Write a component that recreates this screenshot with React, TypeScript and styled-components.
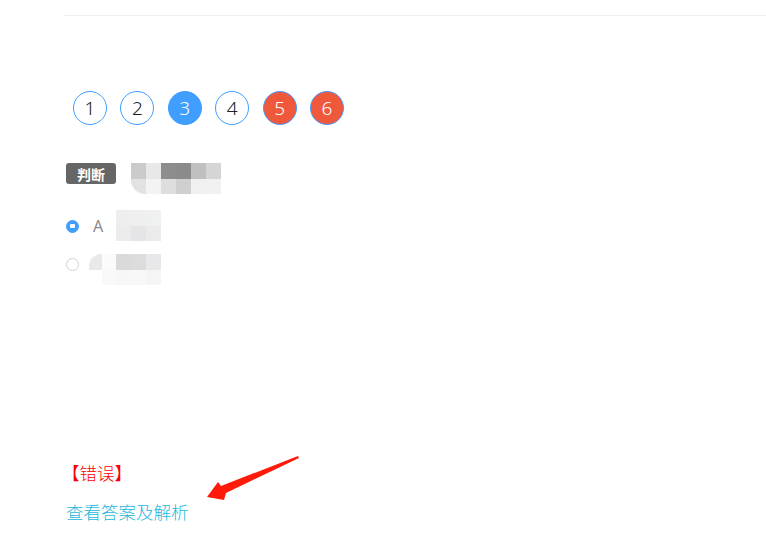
import React from 'react';
import styled, { createGlobalStyle } from 'styled-components';

const GlobalStyle = createGlobalStyle`
  body {
    margin: 0;
    background: #fff;
    font-family: "Noto Sans", "Noto Sans CJK SC", sans-serif;
  }
`

const Page = styled.div`
  position: relative;
  width: 766px;
  height: 542px;
  overflow: hidden;
`

const TopRule = styled.div`
  margin: 15px 0 0 64px;
  height: 1px;
  background: #f0f0f0;
`

const Body = styled.div`
  display: flex;
  flex-direction: column;
  padding-left: 66px;
`

const Steps = styled.div`
  display: flex;
  gap: 13.4px;
  margin: 75px 0 0 7px;
`

const Step = styled.div<{ $state: 'idle' | 'current' | 'wrong' }>`
  width: 34px;
  height: 34px;
  box-sizing: border-box;
  border-radius: 50%;
  border: 1px solid #409eff;
  display: flex;
  align-items: center;
  justify-content: center;
  font-size: 19px;
  font-weight: 300;
  color: ${p => (p.$state === 'idle' ? '#222' : '#fff')};
  background: ${p =>
    p.$state === 'current' ? '#409eff' : p.$state === 'wrong' ? '#f0583c' : '#fff'};
`

const Question = styled.div`
  display: flex;
  align-items: flex-start;
  gap: 15px;
  margin-top: 38px;
`

const Tag = styled.span`
  width: 50px;
  height: 21px;
  border-radius: 3px;
  background: #666;
  color: #fff;
  font-family: "Noto Sans CJK SC", sans-serif;
  font-size: 14px;
  font-weight: 700;
  display: flex;
  align-items: center;
  justify-content: center;
`

const Mosaic = styled.div<{ $cols: string }>`
  display: grid;
  grid-template-columns: ${p => p.$cols};
  grid-auto-rows: 15.5px;
`

const Cell = styled.div<{ $bg: string; $round?: 'tl' | 'bl' }>`
  background: ${p => p.$bg};
  border-bottom-left-radius: ${p => (p.$round === 'bl' ? '14px' : '0')};
  border-top-left-radius: ${p => (p.$round === 'tl' ? '12px' : '0')};
`

const Option = styled.div<{ $top: number }>`
  display: flex;
  align-items: flex-start;
  margin-top: ${p => p.$top}px;
  height: 31px;
`

const Radio = styled.span<{ $checked?: boolean; $shift: number }>`
  width: 13px;
  height: 13px;
  margin-top: ${p => p.$shift}px;
  box-sizing: border-box;
  border-radius: 50%;
  border: 1px solid ${p => (p.$checked ? '#409eff' : '#d0d0d0')};
  background: ${p => (p.$checked ? '#409eff' : '#fff')};
  display: flex;
  align-items: center;
  justify-content: center;
  &::after {
    content: '';
    display: ${p => (p.$checked ? 'block' : 'none')};
    width: 5px;
    height: 4px;
    border-radius: 1px;
    background: #fff;
  }
`

const Letter = styled.span`
  margin: 5px 0 0 14px;
  width: 23px;
  font-size: 16px;
  line-height: 22px;
  color: #8a8a8a;
`

const Spacer = styled.span<{ $w: number }>`
  width: ${p => p.$w}px;
`

const Verdict = styled.div`
  margin-top: 178px;
  margin-left: -4px;
  font-family: "Noto Sans CJK SC", sans-serif;
  font-size: 17.5px;
  font-weight: 300;
  line-height: 20px;
  color: #ff0000;
`

const AnswerLink = styled.a`
  margin-top: 19px;
  font-family: "Noto Sans CJK SC", sans-serif;
  font-size: 17.5px;
  font-weight: 300;
  line-height: 20px;
  color: #23b7dc;
  text-decoration: none;
  cursor: pointer;
`

const Arrow = styled.svg`
  position: absolute;
  left: 0;
  top: 0;
  pointer-events: none;
`

const steps: { n: number; state: 'idle' | 'current' | 'wrong' }[] = [
  { n: 1, state: 'idle' },
  { n: 2, state: 'idle' },
  { n: 3, state: 'current' },
  { n: 4, state: 'idle' },
  { n: 5, state: 'wrong' },
  { n: 6, state: 'wrong' },
]

const stemCells = [
  '#cbcbcb', '#e8e8e8', '#8d8d8d', '#8b8b8b', '#c0c0c0', '#d5d5d5',
  '#e2e2e2', '#f3f3f3', '#dedede', '#cfcfcf', '#f0f0f0', '#f1f1f1',
]

const optionA = [
  '#eeeeee', '#efefef', '#eff0f0',
  '#ececec', '#e5e5e7', '#ebebeb',
]

const optionB = [
  '#e9e9e9', '#fafbfc', '#dadada', '#dcdcdc', '#e8e8ea',
  '#fff', '#f9f9f9', '#f7f7f7', '#f8f8f8', '#f5f5f5',
]

export default function App() {
  return (
    <Page>
      <GlobalStyle />
      <TopRule />
      <Body>
        <Steps>
          {steps.map(s => (
            <Step key={s.n} $state={s.state}>{s.n}</Step>
          ))}
        </Steps>

        <Question>
          <Tag>判断</Tag>
          <Mosaic $cols="repeat(6, 15px)">
            {stemCells.map((c, i) => (
              <Cell key={i} $bg={c} $round={i === 6 ? 'bl' : undefined} />
            ))}
          </Mosaic>
        </Question>

        <Option $top={16}>
          <Radio $checked $shift={9.5} />
          <Letter>A</Letter>
          <Mosaic $cols="repeat(3, 15px)">
            {optionA.map((c, i) => (
              <Cell key={i} $bg={c} />
            ))}
          </Mosaic>
        </Option>

        <Option $top={13}>
          <Radio $shift={3.5} />
          <Spacer $w={10} />
          <Mosaic $cols="13px 14px 15px 15px 15px">
            {optionB.map((c, i) => (
              <Cell key={i} $bg={c} $round={i === 0 ? 'tl' : undefined} />
            ))}
          </Mosaic>
        </Option>

        <Verdict>【错误】</Verdict>
        <AnswerLink>查看答案及解析</AnswerLink>
      </Body>

      <Arrow width="766" height="542" viewBox="0 0 766 542">
        <polygon
          points="207,497 218,482 221,486 298,456 299,458 226,493 224,500"
          fill="#ff1a0a"
        />
      </Arrow>
    </Page>
  )
}
